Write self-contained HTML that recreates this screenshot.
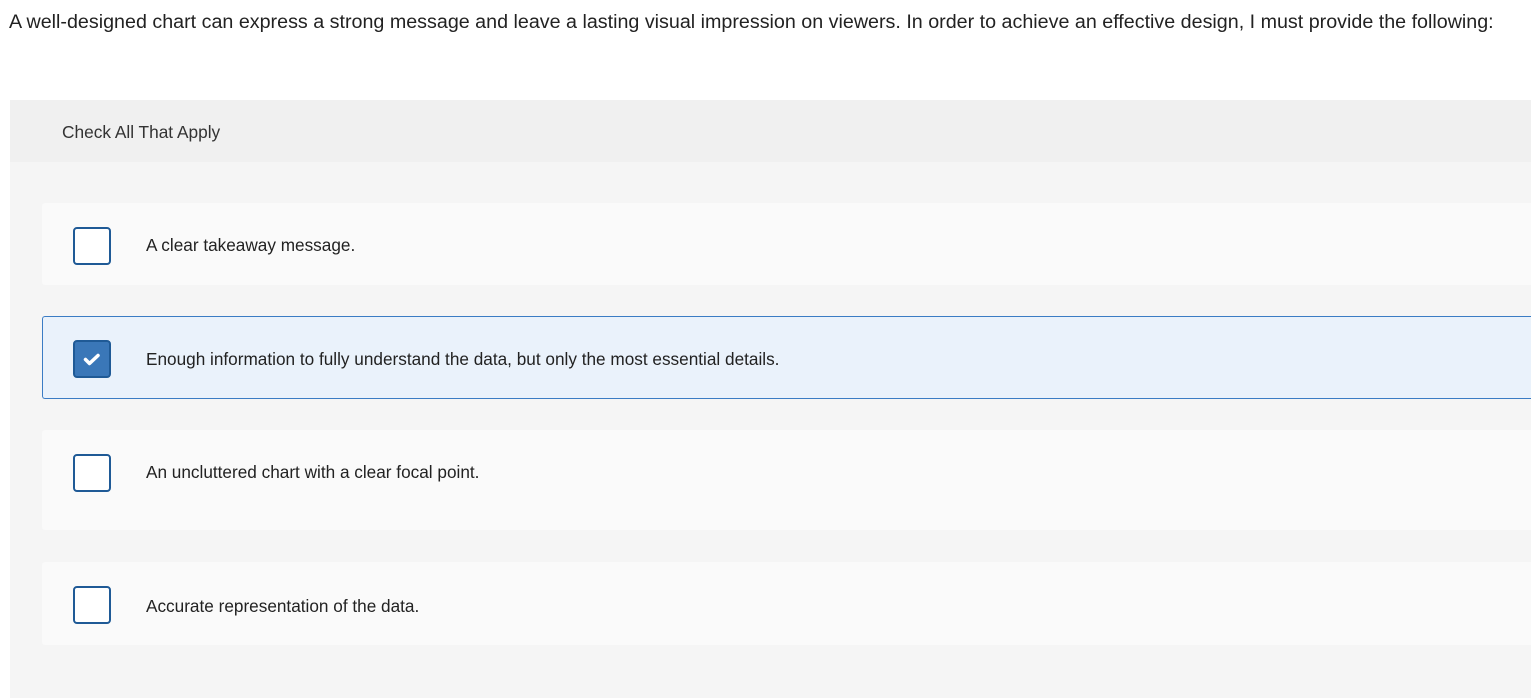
<!DOCTYPE html>
<html><head><style>
body{margin:0;background:#fff;width:1531px;height:698px;overflow:hidden;font-family:"Liberation Sans",sans-serif;color:#222;position:relative}
.q{position:absolute;left:9px;top:11px;font-size:19.7px;white-space:nowrap;color:#222}
.panel{position:absolute;left:10px;top:100px;width:1521px;height:598px;background:#f5f5f5}
.hd{position:absolute;left:0;top:0;width:1521px;height:62px;background:#f0f0f0}
.hd span{position:absolute;left:52px;top:22px;font-size:17.3px;color:#333}
.card{position:absolute;left:32px;width:1489px;background:#fafafa;border-radius:3px 0 0 3px}
.card .cb{position:absolute;left:31px;width:34px;height:34px;border:2px solid #1f5a96;border-radius:4px;background:#fff}
.card .t{position:absolute;left:104px;font-size:17.2px;color:#222;white-space:nowrap}
.sel{background:#eaf2fb;border:1px solid #3b7cc4;border-right:none;box-sizing:border-box}
.sel .cb{background:#3a77b8}
</style></head><body>
<div class="q">A well-designed chart can express a strong message and leave a lasting visual impression on viewers. In order to achieve an effective design, I must provide the following:</div>
<div class="panel">
<div class="hd"><span>Check All That Apply</span></div>
<div class="card" style="top:103px;height:82px"><div class="cb" style="top:24px"></div><div class="t" style="top:32px">A clear takeaway message.</div></div>
<div class="card sel" style="top:216px;height:83px"><div class="cb" style="top:23px;left:30px"><svg width="34" height="34" viewBox="0 0 34 34"><path d="M10.5 17.5l4 4 8.5-8" stroke="#fff" stroke-width="3.5" fill="none" stroke-linecap="round" stroke-linejoin="round"/></svg></div><div class="t" style="top:32px;left:103px">Enough information to fully understand the data, but only the most essential details.</div></div>
<div class="card" style="top:330px;height:100px"><div class="cb" style="top:24px"></div><div class="t" style="top:32px">An uncluttered chart with a clear focal point.</div></div>
<div class="card" style="top:462px;height:83px"><div class="cb" style="top:24px"></div><div class="t" style="top:34px">Accurate representation of the data.</div></div>
</div>
</body></html>
